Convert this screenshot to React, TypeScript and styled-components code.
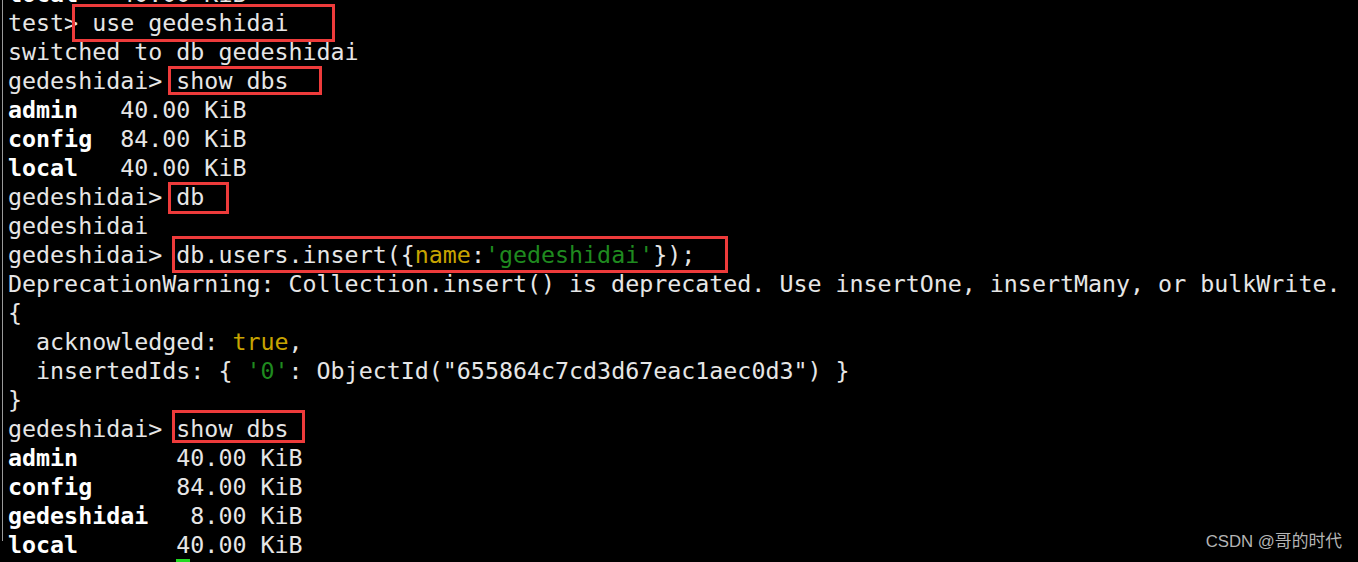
import React from "react";
import styled, { createGlobalStyle } from "styled-components";

const Global = createGlobalStyle`
  html, body {
    margin: 0;
    padding: 0;
    background: #000;
    overflow: hidden;
  }
  body {
    width: 1358px;
    height: 562px;
  }
`;

const Screen = styled.div`
  position: relative;
  width: 1358px;
  height: 562px;
  background: #000;
  overflow: hidden;
`;

const Frame = styled.div`
  margin-left: 2px;
  height: 100%;
  border-left: 1px solid #9a9a9a;
  padding-left: 5px;
`;

const Term = styled.pre`
  margin: -21px 0 0 0;
  font-family: "DejaVu Sans Mono", monospace;
  font-size: 23.3px;
  line-height: 29px;
  color: #e6e6e6;
  white-space: pre;
`;

const Line = styled.div`
  height: 29px;
`;

const B = styled.b`
  font-weight: bold;
  color: #ffffff;
`;

const Key = styled.span`
  color: #c8a400;
`;

const Str = styled.span`
  color: #1f8a1f;
`;

type Ext = { $l: number; $r: number; $t: number; $b: number };

const Marked = styled.span<Ext>`
  position: relative;
  display: inline-block;
  height: 29px;
  &::after {
    content: "";
    position: absolute;
    left: ${(p) => -p.$l}px;
    right: ${(p) => -p.$r}px;
    top: ${(p) => -p.$t}px;
    bottom: ${(p) => -p.$b}px;
    border: 3px solid #ee3b3b;
    pointer-events: none;
  }
`;

const Cursor = styled.span`
  display: inline-block;
  width: 14px;
  height: 29px;
  background: #22d822;
  vertical-align: top;
`;

const Watermark = styled.div`
  position: absolute;
  right: 16px;
  bottom: 10px;
  font-family: "Liberation Sans", "Noto Sans CJK SC", sans-serif;
  font-size: 16.8px;
  color: #b4b4b4;
`;

export default function App() {
  return (
    <Screen>
      <Global />
      <Frame>
        <Term>
          <Line><B>local</B>   40.00 KiB</Line>
          <Line>test&gt; <Marked $l={20} $r={46} $t={4} $b={5}>use gedeshidai</Marked></Line>
          <Line>switched to db gedeshidai</Line>
          <Line>gedeshidai&gt; <Marked $l={8} $r={33} $t={0} $b={0}>show dbs</Marked></Line>
          <Line><B>admin</B>   40.00 KiB</Line>
          <Line><B>config</B>  84.00 KiB</Line>
          <Line><B>local</B>   40.00 KiB</Line>
          <Line>gedeshidai&gt; <Marked $l={8} $r={25} $t={0} $b={3}>db</Marked></Line>
          <Line>gedeshidai</Line>
          <Line>gedeshidai&gt; <Marked $l={4} $r={33} $t={4} $b={4}>db.users.insert({"{"}<Key>name</Key>:<Str>'gedeshidai'</Str>{"}"});</Marked></Line>
          <Line>DeprecationWarning: Collection.insert() is deprecated. Use insertOne, insertMany, or bulkWrite.</Line>
          <Line>{"{"}</Line>
          <Line>  acknowledged: <Key>true</Key>,</Line>
          <Line>  insertedIds: {"{"} <Str>'0'</Str>: ObjectId("655864c7cd3d67eac1aec0d3") {"}"}</Line>
          <Line>{"}"}</Line>
          <Line>gedeshidai&gt; <Marked $l={4} $r={16} $t={4} $b={0}>show dbs</Marked></Line>
          <Line><B>admin</B>       40.00 KiB</Line>
          <Line><B>config</B>      84.00 KiB</Line>
          <Line><B>gedeshidai</B>   8.00 KiB</Line>
          <Line><B>local</B>       40.00 KiB</Line>
          <Line>            <Cursor /></Line>
        </Term>
      </Frame>
      <Watermark>CSDN @哥的时代</Watermark>
    </Screen>
  );
}
